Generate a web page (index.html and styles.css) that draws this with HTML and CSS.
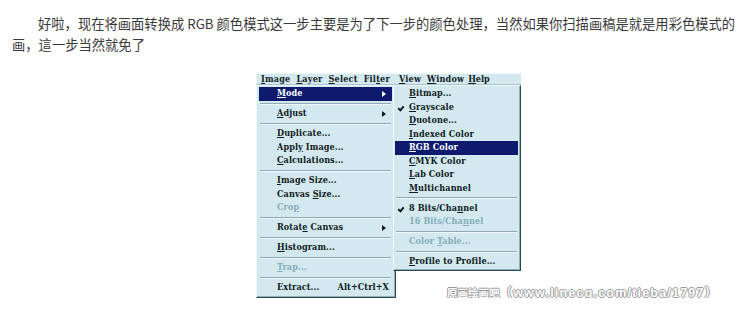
FILE: index.html
```html
<!DOCTYPE html>
<html lang="zh">
<head>
<meta charset="utf-8">
<link rel="stylesheet" href="styles.css">
</head>
<body>
<p class="intro">好啦，现在将画面转换成 RGB 颜色模式这一步主要是为了下一步的颜色处理，当然如果你扫描画稿是就是用彩色模式的画，這一步当然就免了</p>
<div class="shot">
  <div class="menubar">
    <span class="mb-item"><u>I</u>mage</span>
    <span class="mb-item"><u>L</u>ayer</span>
    <span class="mb-item"><u>S</u>elect</span>
    <span class="mb-item">Fil<u>t</u>er</span>
    <span class="mb-item mb-wide"><u>V</u>iew</span>
    <span class="mb-item"><u>W</u>indow</span>
    <span class="mb-item mb-tight"><u>H</u>elp</span>
  </div>
  <div class="row">
    <div class="menu-wrap">
      <div class="menu main">
        <div class="item active"><span><u>M</u>ode</span><span class="arrow"></span></div>
        <div class="sep"></div>
        <div class="item"><span><u>A</u>djust</span><span class="arrow"></span></div>
        <div class="sep"></div>
        <div class="item"><span><u>D</u>uplicate...</span></div>
        <div class="item"><span>Appl<u>y</u> Image...</span></div>
        <div class="item"><span><u>C</u>alculations...</span></div>
        <div class="sep"></div>
        <div class="item"><span><u>I</u>mage Size...</span></div>
        <div class="item"><span>Canvas <u>S</u>ize...</span></div>
        <div class="item disabled"><span>Cro<u>p</u></span></div>
        <div class="sep"></div>
        <div class="item"><span>Rotat<u>e</u> Canvas</span><span class="arrow"></span></div>
        <div class="sep"></div>
        <div class="item"><span><u>H</u>istogram...</span></div>
        <div class="sep"></div>
        <div class="item disabled"><span><u>T</u>rap...</span></div>
        <div class="sep"></div>
        <div class="item"><span>Extract...</span><span class="key">Alt+Ctrl+X</span></div>
      </div>
      <div class="menu sub">
        <div class="item"><span><u>B</u>itmap...</span></div>
        <div class="item checked"><span><u>G</u>rayscale</span></div>
        <div class="item"><span><u>D</u>uotone...</span></div>
        <div class="item"><span><u>I</u>ndexed Color</span></div>
        <div class="item active"><span><u>R</u>GB Color</span></div>
        <div class="item"><span><u>C</u>MYK Color</span></div>
        <div class="item"><span><u>L</u>ab Color</span></div>
        <div class="item"><span><u>M</u>ultichannel</span></div>
        <div class="sep"></div>
        <div class="item checked"><span>8 Bits/Cha<u>n</u>nel</span></div>
        <div class="item disabled"><span>16 Bits/Cha<u>n</u>nel</span></div>
        <div class="sep"></div>
        <div class="item disabled"><span>Color <u>T</u>able...</span></div>
        <div class="sep"></div>
        <div class="item"><span><u>P</u>rofile to Profile...</span></div>
      </div>
    </div>
    <div class="watermark"><span class="wm-cn">原画绘画吧</span><span class="wm-url">（www.linecg.com/tieba/1797）</span></div>
  </div>
</div>
</body>
</html>
```

FILE: styles.css
```css
html, body {
  margin: 0;
  padding: 0;
  background: #ffffff;
}

body {
  font-family: "Noto Sans CJK SC", "Noto Sans", sans-serif;
}

.intro {
  margin: 0;
  padding: 13px 0 0 12px;
  width: 736px;
  font-size: 13.3px;
  line-height: 21px;
  color: #3a3a3a;
  text-indent: 26px;
}

.shot {
  margin: 18px 0 0 256px;
  font-family: "DejaVu Serif Condensed", "DejaVu Serif", serif;
  font-stretch: condensed;
  font-weight: bold;
  font-size: 9px;
  letter-spacing: 0.1px;
  color: #111a22;
}

.shot u {
  text-decoration: underline;
  text-underline-offset: 1px;
  text-decoration-thickness: 1px;
}

.menubar {
  width: 265px;
  height: 12px;
  box-sizing: border-box;
  background: #d3e9ef;
  border-top: 1px solid #eef8fb;
  border-left: 1px solid #eef8fb;
  border-bottom: 1px solid #a9c6cf;
  display: flex;
  align-items: center;
  padding-left: 4px;
  gap: 6px;
  line-height: 10px;
  letter-spacing: 0.2px;
}

.mb-wide {
  margin-left: 3px;
}

.mb-tight {
  margin-left: -2px;
  letter-spacing: 0;
}

.row {
  display: flex;
  align-items: flex-end;
}

.menu-wrap {
  position: relative;
  width: 140px;
  flex: none;
}

.menu {
  background: #d3e9ef;
  box-sizing: border-box;
  border-top: 1px solid #eef8fb;
  border-left: 1px solid #eef8fb;
  border-right: 1px solid #2d4650;
  border-bottom: 1px solid #2d4650;
  box-shadow: inset -1px -1px 0 #8fb0ba;
}

.main {
  width: 140px;
  padding: 1px 3px 2.5px 2px;
}

.sub {
  position: absolute;
  left: 137px;
  top: 0;
  width: 128px;
  padding: 1px 2px 1.5px 1px;
}

.item {
  height: 13.5px;
  display: flex;
  align-items: center;
  justify-content: space-between;
  line-height: 13.5px;
  white-space: nowrap;
  position: relative;
}

.main .item {
  padding: 0 3px 0 18px;
}

.main .item .arrow {
  margin-right: 3px;
}

.sub .item {
  padding: 0 4px 0 14px;
}

.item.active {
  background: #0e1a6e;
  color: #ffffff;
}

.item.disabled {
  color: #86aebb;
}

.item.checked::before {
  content: "";
  position: absolute;
  left: 4px;
  top: 4px;
  width: 2px;
  height: 4px;
  border-right: 2px solid #111a22;
  border-bottom: 2px solid #111a22;
  transform: rotate(40deg);
}

.arrow {
  width: 0;
  height: 0;
  border-top: 3.5px solid transparent;
  border-bottom: 3.5px solid transparent;
  border-left: 4px solid currentColor;
}

.key {
  margin-left: 10px;
}

.sep {
  height: 0;
  margin: 2.25px 1px;
  border-top: 1px solid #8cabb5;
  border-bottom: 1px solid #eef8fb;
}

.watermark {
  margin: 0 0 -2px 51px;
  font-family: "Liberation Sans", "Noto Sans CJK SC", sans-serif;
  font-weight: bold;
  font-size: 12.5px;
  line-height: 13px;
  color: #ffffff;
  white-space: nowrap;
  text-shadow: 1px 0 0 #9a9a9a, -1px 0 0 #9a9a9a, 0 1px 0 #9a9a9a, 0 -1px 0 #9a9a9a;
}

.wm-cn {
  font-family: "Noto Sans CJK SC", sans-serif;
  font-size: 10.5px;
  letter-spacing: 0;
}

.wm-url {
  letter-spacing: 1.2px;
}
```
